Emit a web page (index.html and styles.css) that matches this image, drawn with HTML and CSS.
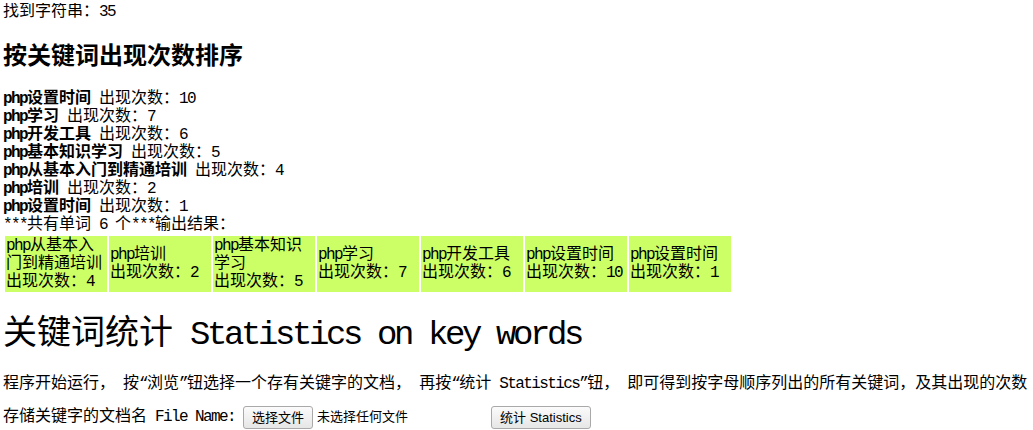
FILE: index.html
```html
<!DOCTYPE html>
<html lang="zh-CN">
<head>
<meta charset="utf-8">
<title>关键词统计</title>
<link rel="stylesheet" href="styles.css">
</head>
<body>
<div class="line">找到字符串：<span class="en">35</span></div>
<h2 class="sub">按关键词出现次数排序</h2>
<div class="list">
<b><span class="en">php</span>设置时间</b><span class="en"> </span>出现次数：<span class="en">10</span><br>
<b><span class="en">php</span>学习</b><span class="en"> </span>出现次数：<span class="en">7</span><br>
<b><span class="en">php</span>开发工具</b><span class="en"> </span>出现次数：<span class="en">6</span><br>
<b><span class="en">php</span>基本知识学习</b><span class="en"> </span>出现次数：<span class="en">5</span><br>
<b><span class="en">php</span>从基本入门到精通培训</b><span class="en"> </span>出现次数：<span class="en">4</span><br>
<b><span class="en">php</span>培训</b><span class="en"> </span>出现次数：<span class="en">2</span><br>
<b><span class="en">php</span>设置时间</b><span class="en"> </span>出现次数：<span class="en">1</span><br>
<span class="en">***</span>共有单词<span class="en"> 6 </span>个<span class="en">***</span>输出结果：
</div>
<table class="result">
<tr>
<td><span class="en">php</span>从基本入门到精通培训<br>出现次数：<span class="en">4</span></td>
<td><span class="en">php</span>培训<br>出现次数：<span class="en">2</span></td>
<td><span class="en">php</span>基本知识学习<br>出现次数：<span class="en">5</span></td>
<td><span class="en">php</span>学习<br>出现次数：<span class="en">7</span></td>
<td><span class="en">php</span>开发工具<br>出现次数：<span class="en">6</span></td>
<td><span class="en">php</span>设置时间<br>出现次数：<span class="en">10</span></td>
<td><span class="en">php</span>设置时间<br>出现次数：<span class="en">1</span></td>
</tr>
</table>
<h1 class="title">关键词统计<span class="en"> Statistics on key words</span></h1>
<p class="intro">程序开始运行，<span class="en"> </span>按<span class="en">“</span>浏览<span class="en">”</span>钮选择一个存有关键字的文档，<span class="en"> </span>再按<span class="en">“</span>统计<span class="en"> Statistics”</span>钮，<span class="en"> </span>即可得到按字母顺序列出的所有关键词，及其出现的次数</p>
<p class="form">存储关键字的文档名<span class="en"> File Name: </span><span class="file"><button class="btn" type="button">选择文件</button><span class="nofile">未选择任何文件</span></span><span class="en"> </span><button class="btn" type="button">统计 Statistics</button></p>
</body>
</html>
```
FILE: styles.css
```css
html, body {
  background: #ffffff;
}
body {
  margin: 3px;
  color: #000000;
  font-family: "Liberation Mono", "Noto Sans CJK SC", monospace;
  font-size: 16px;
  line-height: 18px;
}
.en {
  letter-spacing: -0.1em;
}
.line {
  margin: 0;
}
.sub {
  font-size: 24px;
  line-height: 27px;
  font-weight: bold;
  margin: 23px 0 19px;
}
.list b {
  font-weight: bold;
}
.result {
  border-spacing: 2px;
  border-collapse: separate;
}
.result td {
  width: 100px;
  padding: 1px;
  background: #ccff66;
  vertical-align: middle;
  line-height: 18px;
}
.title {
  font-size: 34px;
  line-height: 37px;
  font-weight: normal;
  margin: 23px 0 21px;
}
.intro {
  margin: 16px 0 12px;
  white-space: nowrap;
}
.form {
  margin: 0;
  white-space: nowrap;
  line-height: 24px;
}
.file {
  display: inline-block;
  width: 240px;
}
.btn {
  font-family: "Liberation Sans", "Noto Sans CJK SC", sans-serif;
  font-size: 13px;
  line-height: 15px;
  height: 23px;
  padding: 0 8px;
  margin: 0;
  border: 1px solid #a9a9a9;
  border-radius: 3px;
  background: linear-gradient(#fbfbfb, #e6e6e6);
  color: #000000;
  vertical-align: middle;
}
.nofile {
  font-family: "Liberation Sans", "Noto Sans CJK SC", sans-serif;
  font-size: 13px;
  margin-left: 4px;
  vertical-align: middle;
}
```
